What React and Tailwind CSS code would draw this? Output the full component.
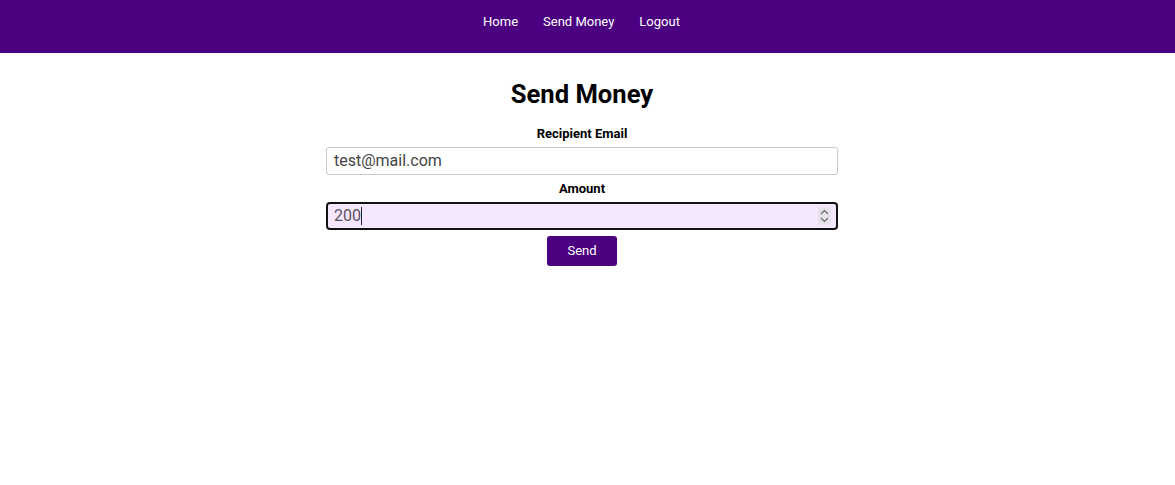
export default function App() {
  return (
    <div className="min-h-[485px] bg-white" style={{ fontFamily: "Roboto, 'Liberation Sans', sans-serif" }}>
      <header className="h-[53px] bg-[#4b0082] flex justify-center items-start pt-[14px] pr-[12px]">
        <nav className="flex gap-[25px] text-[13px] text-white leading-[16px]">
          <a className="cursor-pointer">Home</a>
          <a className="cursor-pointer">Send Money</a>
          <a className="cursor-pointer">Logout</a>
        </nav>
      </header>
      <main className="flex flex-col items-center pt-[25px] pr-[11px]">
        <h2 className="text-[25.6px] leading-[32px] font-bold text-black">Send Money</h2>
        <div className="w-[512px] flex flex-col items-center mt-[16px]">
          <label className="text-[13px] leading-[16px] font-bold text-black">Recipient Email</label>
          <div className="mt-[5px] w-full h-[28px] border border-[#c8c8c8] rounded-[3px] flex items-center px-[7px] text-[16px] text-[#444]">
            test@mail.com
          </div>
          <label className="mt-[6px] text-[13px] leading-[16px] font-bold text-black">Amount</label>
          <div className="relative mt-[5px] w-full h-[28px] border-2 border-[#111] rounded-[4px] bg-[#f5e8fe] flex items-center px-[6px] text-[16px] text-[#5a5060]">
            <span>200</span>
            <span className="w-px h-[18px] bg-[#222] inline-block"></span>
            <div className="absolute right-[5px] top-[3px] w-[13px] h-[18px] bg-[#e6e2ea] flex flex-col items-center justify-center gap-[2px]">
              <svg width="9" height="6" viewBox="0 0 9 6"><path d="M1 5 L4.5 1.5 L8 5" fill="none" stroke="#666" strokeWidth="1.2" /></svg>
              <svg width="9" height="6" viewBox="0 0 9 6"><path d="M1 1 L4.5 4.5 L8 1" fill="none" stroke="#666" strokeWidth="1.2" /></svg>
            </div>
          </div>
          <button className="mt-[6px] w-[70px] h-[30px] bg-[#4b0082] rounded-[3px] text-white text-[13px]">Send</button>
        </div>
      </main>
    </div>
  );
}
